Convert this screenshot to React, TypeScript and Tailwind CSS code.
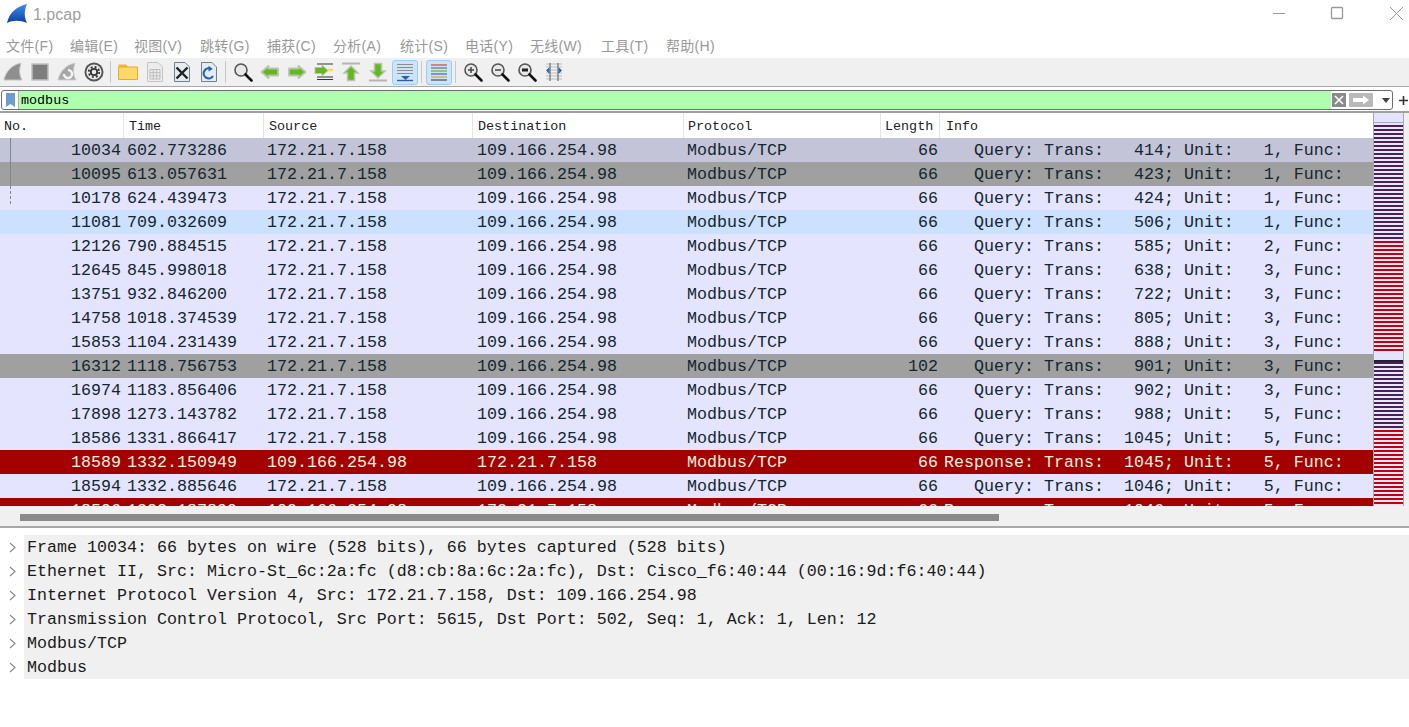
import React from 'react';

const menus = [
  ['文件(F)', 'w-[64px]'],
  ['编辑(E)', 'w-[64px]'],
  ['视图(V)', 'w-[66px]'],
  ['跳转(G)', 'w-[67px]'],
  ['捕获(C)', 'w-[66px]'],
  ['分析(A)', 'w-[67px]'],
  ['统计(S)', 'w-[65px]'],
  ['电话(Y)', 'w-[65px]'],
  ['无线(W)', 'w-[71px]'],
  ['工具(T)', 'w-[65px]'],
  ['帮助(H)', 'w-[64px]'],
];

type Packet = { no: string; time: string; src?: string; dst?: string; len?: string; info: string; bg: string };

const q = (trans: string, unit: string) => `   Query: Trans: ${trans.padStart(5)}; Unit: ${unit.padStart(3)}, Func:`;
const r = (trans: string, unit: string) => `Response: Trans: ${trans.padStart(5)}; Unit: ${unit.padStart(3)}, Func:`;

const normal = 'bg-[#e4e4ff] text-[#12272e]';
const red = 'bg-[#a40000] text-[#f4f0e0]';

const packets: Packet[] = [
  { no: '10034', time: '602.773286', info: q('414', '1'), bg: 'bg-[#c4c4d9] text-[#12272e]' },
  { no: '10095', time: '613.057631', info: q('423', '1'), bg: 'bg-[#a0a0a0] text-[#12272e]' },
  { no: '10178', time: '624.439473', info: q('424', '1'), bg: normal },
  { no: '11081', time: '709.032609', info: q('506', '1'), bg: 'bg-[#cce0ff] text-[#12272e]' },
  { no: '12126', time: '790.884515', info: q('585', '2'), bg: normal },
  { no: '12645', time: '845.998018', info: q('638', '3'), bg: normal },
  { no: '13751', time: '932.846200', info: q('722', '3'), bg: normal },
  { no: '14758', time: '1018.374539', info: q('805', '3'), bg: normal },
  { no: '15853', time: '1104.231439', info: q('888', '3'), bg: normal },
  { no: '16312', time: '1118.756753', len: '102', info: q('901', '3'), bg: 'bg-[#a0a0a0] text-[#12272e]' },
  { no: '16974', time: '1183.856406', info: q('902', '3'), bg: normal },
  { no: '17898', time: '1273.143782', info: q('988', '5'), bg: normal },
  { no: '18586', time: '1331.866417', info: q('1045', '5'), bg: normal },
  { no: '18589', time: '1332.150949', src: '109.166.254.98', dst: '172.21.7.158', info: r('1045', '5'), bg: red },
  { no: '18594', time: '1332.885646', info: q('1046', '5'), bg: normal },
  { no: '18596', time: '1333.187899', src: '109.166.254.98', dst: '172.21.7.158', info: r('1046', '5'), bg: red },
];

const details = [
  'Frame 10034: 66 bytes on wire (528 bits), 66 bytes captured (528 bits)',
  'Ethernet II, Src: Micro-St_6c:2a:fc (d8:cb:8a:6c:2a:fc), Dst: Cisco_f6:40:44 (00:16:9d:f6:40:44)',
  'Internet Protocol Version 4, Src: 172.21.7.158, Dst: 109.166.254.98',
  'Transmission Control Protocol, Src Port: 5615, Dst Port: 502, Seq: 1, Ack: 1, Len: 12',
  'Modbus/TCP',
  'Modbus',
];

const headers = [
  ['No.', 'pl-[4px]'],
  ['Time', 'pl-[5px]'],
  ['Source', 'pl-[5px]'],
  ['Destination', 'pl-[5px]'],
  ['Protocol', 'pl-[4px]'],
  ['Length', 'pl-[4px]'],
  ['Info', 'pl-[6px]'],
];

const columns = 'grid grid-cols-[124px_140px_209px_211px_197px_59px_433px]';

const Ico = ({ children }: { children: React.ReactNode }) => (
  <svg width="20" height="20" viewBox="0 0 20 20" fill="none">{children}</svg>
);

const fin = 'M1 18 C3 9 9 3 18 1 C16 7 16 13 19 18 Z';

const Magnifier = ({ mark }: { mark?: 'plus' | 'minus' | 'reset' }) => (
  <Ico>
    <circle cx="8" cy="8" r="6" fill="#e8e8e8" stroke="#555" strokeWidth="1.6" />
    <path d="M12.5 12.5 L18.5 18.5" stroke="#111" strokeWidth="2.6" strokeLinecap="round" />
    {mark && <path d="M5 8 H11" stroke="#444" strokeWidth="1.5" />}
    {mark === 'plus' && <path d="M8 5 V11" stroke="#444" strokeWidth="1.5" />}
    {mark === 'reset' && <path d="M5 8 H11" stroke="#222" strokeWidth="3" />}
  </Ico>
);

const Arrow = ({ d }: { d: string }) => (
  <Ico>
    <path d={d} fill="#62b81e" stroke="#b8c4ac" strokeWidth="1.8" strokeLinejoin="round" />
  </Ico>
);

const Tool = ({ children, active }: { children: React.ReactNode; active?: boolean }) => (
  <div className="flex w-[27px] h-[26px] items-center justify-center">
    {active ? (
      <div className="flex w-[26px] h-[25px] items-center justify-center rounded-[3px] border border-[#9ccbf5] bg-[#cde4f8]">{children}</div>
    ) : (
      children
    )}
  </div>
);

const Sep = () => (
  <div className="flex w-[7px] h-[26px] items-center justify-center">
    <div className="w-px h-[22px] bg-[#c8c8c8]" />
  </div>
);

const Toolbar = () => (
  <div className="flex h-[29px] items-center bg-[#f0f0f0] border-b border-[#a8a8a8]">
    <div className="flex items-center -ml-px">
      <Tool><Ico><path d={fin} fill="#8f8f8f" stroke="#c4c4c4" /></Ico></Tool>
      <Tool><Ico><rect x="2" y="2" width="16" height="16" fill="#7e7e7e" stroke="#c0c0c0" strokeWidth="1.5" /></Ico></Tool>
      <Tool>
        <Ico>
          <path d={fin} fill="#a8a8a8" stroke="#cfcfcf" />
          <path d="M7 12 A4 4 0 1 0 11 8" stroke="#f2f2f2" strokeWidth="2.4" />
        </Ico>
      </Tool>
      <Tool>
        <Ico>
          <circle cx="10" cy="10" r="9.5" fill="#555" />
          <circle cx="10" cy="10" r="7.6" fill="#ececec" />
          <circle cx="10" cy="10" r="5.2" fill="none" stroke="#333" strokeWidth="1.8" strokeDasharray="2 2.08" />
          <circle cx="10" cy="10" r="3.2" fill="none" stroke="#333" strokeWidth="1.8" />
        </Ico>
      </Tool>
      <Sep />
      <Tool>
        <Ico>
          <path d="M0.5 5 V2.5 H8 L10 5 Z" fill="#f4b51e" />
          <path d="M0.5 5 H19.5 V17.5 H0.5 Z" fill="#fbd869" stroke="#e6ad2c" />
        </Ico>
      </Tool>
      <Tool>
        <Ico>
          <path d="M2.5 0.5 H13 L17.5 5 V19.5 H2.5 Z" fill="#ececec" stroke="#c4c4c4" />
          <path d="M5 7.5 H15 V17 H5 Z M8.3 7.5 V17 M11.7 7.5 V17 M5 10.7 H15 M5 13.9 H15" stroke="#bdbdbd" />
        </Ico>
      </Tool>
      <Tool>
        <Ico>
          <path d="M2.5 0.5 H13 L17.5 5 V19.5 H2.5 Z" fill="#e4ecf2" stroke="#6f7f8c" />
          <path d="M4.5 5.5 L15.5 16.5 M15.5 5.5 L4.5 16.5" stroke="#222" strokeWidth="2.4" />
        </Ico>
      </Tool>
      <Tool>
        <Ico>
          <path d="M2.5 0.5 H13 L17.5 5 V19.5 H2.5 Z" fill="#e4ecf2" stroke="#6f7f8c" />
          <path d="M14 14 A5 5 0 1 1 12 7" stroke="#2a62ae" strokeWidth="2.2" />
          <path d="M9.5 3.8 L13.8 7 L9.5 9.5 Z" fill="#2a62ae" />
        </Ico>
      </Tool>
      <Sep />
      <Tool><Magnifier /></Tool>
      <Tool><Arrow d="M1.5 10 L8.5 4 V6.5 H18 V13.5 H8.5 V16 Z" /></Tool>
      <Tool><Arrow d="M18.5 10 L11.5 4 V6.5 H2 V13.5 H11.5 V16 Z" /></Tool>
      <Tool>
        <Ico>
          <path d="M3 2 H19 M3 15 H19 M3 17.5 H19" stroke="#333" />
          <path d="M14 8 H19" stroke="#f6e04a" strokeWidth="2.5" />
          <path d="M14 8.5 L8 3 V5.5 H1 V11.5 H8 V14 Z" fill="#62b81e" stroke="#b8c4ac" />
        </Ico>
      </Tool>
      <Tool>
        <Ico>
          <path d="M1 1.5 H19" stroke="#b4b4b4" strokeWidth="2" />
          <path d="M10 4 L17 11 H13.5 V18.5 H6.5 V11 H3 Z" fill="#62b81e" stroke="#b8c4ac" strokeWidth="1.5" />
        </Ico>
      </Tool>
      <Tool>
        <Ico>
          <path d="M1 18.5 H19" stroke="#b4b4b4" strokeWidth="2" />
          <path d="M10 16 L17 9 H13.5 V1.5 H6.5 V9 H3 Z" fill="#62b81e" stroke="#b8c4ac" strokeWidth="1.5" />
        </Ico>
      </Tool>
      <Tool active>
        <Ico>
          <path d="M2 2.5 H18 M2 5.5 H18 M2 8.5 H18 M2 11.5 H18" stroke="#8c8c8c" />
          <path d="M2 18.5 H18" stroke="#2f5f9e" strokeWidth="1.4" />
          <path d="M6 14 H15 L10.5 18 Z" fill="#2f5f9e" />
        </Ico>
      </Tool>
      <Sep />
      <Tool active>
        <Ico>
          <path d="M2 3 H18" stroke="#d94b4b" strokeWidth="1.3" />
          <path d="M2 6 H18" stroke="#777" strokeWidth="1.3" />
          <path d="M2 9 H18" stroke="#74b13c" strokeWidth="1.3" />
          <path d="M2 12 H18" stroke="#4a6fc2" strokeWidth="1.3" />
          <path d="M2 15 H18" stroke="#d1a83e" strokeWidth="1.3" />
          <path d="M2 18 H18" stroke="#555" strokeWidth="1.3" />
        </Ico>
      </Tool>
      <Sep />
      <Tool><Magnifier mark="plus" /></Tool>
      <Tool><Magnifier mark="minus" /></Tool>
      <Tool><Magnifier mark="reset" /></Tool>
      <Tool>
        <Ico>
          <path d="M2 2 H18 M2 5 H18 M2 8 H18 M2 11 H18 M2 14 H18 M2 17 H18" stroke="#bdbdbd" />
          <path d="M6 1 V19 M14 1 V19" stroke="#555" />
          <path d="M5 6 V11 L2.5 8.5 Z M15 6 V11 L17.5 8.5 Z" fill="#2f6fc0" stroke="#2f6fc0" />
        </Ico>
      </Tool>
    </div>
  </div>
);

const FilterBar = () => (
  <div className="flex h-[26px] items-start pt-[3px] pl-px bg-white border-b-2 border-[#a0a0a0]">
    <div className="flex w-[1392px] h-[20px] items-stretch rounded-[3px] border border-[#6e6e6e] bg-white overflow-hidden">
      <div className="flex w-[17px] items-center justify-center border-r border-[#b0b0b0]">
        <svg width="9" height="14" viewBox="0 0 9 14"><path d="M0 0 H9 V14 L4.5 11 L0 14 Z" fill="#6d9bd0" /></svg>
      </div>
      <div className="flex-1 bg-[#afffaf] pl-[2px] text-[13.4px] leading-[19px] text-black">modbus</div>
      <div className="flex w-[61px] items-center pl-px gap-[3px]">
        <svg width="14" height="14" viewBox="0 0 14 14">
          <rect width="14" height="14" fill="#8a8a8a" />
          <path d="M3 3 L11 11 M11 3 L3 11" stroke="#fff" strokeWidth="1.6" />
        </svg>
        <svg width="24" height="14" viewBox="0 0 24 14">
          <rect width="24" height="14" rx="1" fill="#b9b9b9" />
          <path d="M4 5 H14 V2.5 L20 7 L14 11.5 V9 H4 Z" fill="#fff" />
        </svg>
        <svg className="ml-[6px]" width="8" height="5" viewBox="0 0 8 5"><path d="M0 0 H8 L4 5 Z" fill="#444" /></svg>
      </div>
    </div>
    <div className="flex flex-1 h-[20px] items-center justify-center pl-[5px]">
      <svg width="9" height="9" viewBox="0 0 9 9"><path d="M4.5 0 V9 M0 4.5 H9" stroke="#333" strokeWidth="1.6" /></svg>
    </div>
  </div>
);

const Minimap = () => (
  <div className="flex flex-col w-[31px] border-x border-[#a8a8a8] bg-[#e4e4ff]">
    <div className="h-[10px] border-b border-[#a8a8c0]" />
    <div className="h-[2px]" />
    <div className="h-[114px] bg-[repeating-linear-gradient(180deg,#4a2058_0px,#4a2058_2.5px,#e8e8f8_2.5px,#e8e8f8_4px)]" />
    <div className="h-[2px]" />
    <div className="h-[111px] bg-[repeating-linear-gradient(180deg,#c00018_0px,#c00018_2.5px,#f4e8ee_2.5px,#f4e8ee_4px)]" />
    <div className="h-[8px]" />
    <div className="h-[2px] bg-[#20203a]" />
    <div className="h-[68px] bg-[repeating-linear-gradient(180deg,#4a2058_0px,#4a2058_2.5px,#e8e8f8_2.5px,#e8e8f8_4px)]" />
    <div className="flex-1 bg-[repeating-linear-gradient(180deg,#c00018_0px,#c00018_2.5px,#f4e8ee_2.5px,#f4e8ee_4px)]" />
  </div>
);

const PacketList = () => (
  <div className="flex h-[393px] bg-[#f0f0f0]">
    <div className="flex flex-col w-[1373px]">
      <div className={`${columns} h-[25px] bg-white text-[13.4px] leading-[27px] text-[#222]`}>
        {headers.map(([h, pad]) => (
          <div key={h} className={`${pad} border-r border-[#e4e4e4] last:border-r-0`}>{h}</div>
        ))}
      </div>
      <div className="flex-1 overflow-hidden text-[16.67px] leading-[26px] whitespace-pre">
        {packets.map((p, i) => (
          <div key={p.no} className={`${columns} h-[24px] ${p.bg}`}>
            <div className="relative pr-[3px] text-right">
              {i < 2 && <div className="absolute left-[10px] top-0 bottom-0 w-px bg-[#7d8a90]" />}
              {i === 2 && <div className="absolute left-[10px] top-0 h-[18px] border-l border-dashed border-[#7d8a90]" />}
              {p.no}
            </div>
            <div className="pl-[3px]">{p.time}</div>
            <div className="pl-[3px]">{p.src ?? '172.21.7.158'}</div>
            <div className="pl-[4px]">{p.dst ?? '109.166.254.98'}</div>
            <div className="pl-[3px]">Modbus/TCP</div>
            <div className="pr-[2px] text-right">{p.len ?? '66'}</div>
            <div className="pl-[4px]">{p.info}</div>
          </div>
        ))}
      </div>
    </div>
    <Minimap />
  </div>
);

export default function App() {
  return (
    <div className="w-[1409px] h-[727px] overflow-hidden bg-white font-['Liberation_Mono',monospace]">
      {/* title bar */}
      <div className="flex h-[32px] items-center">
        <svg className="ml-[6px] -mt-[5px]" width="22" height="22" viewBox="0 0 22 22">
          <defs>
            <linearGradient id="finBlue" x1="0" y1="0" x2="0" y2="1">
              <stop offset="0" stopColor="#3f8fe8" />
              <stop offset="1" stopColor="#0a3fa8" />
            </linearGradient>
          </defs>
          <path d="M1 20 C3 10 11 3 21 1 C18 8 18 14 21 20 C14 17 7 17 1 20 Z" fill="url(#finBlue)" />
        </svg>
        <div className="ml-[5px] -mt-[2px] flex-1 font-['Liberation_Sans',sans-serif] text-[16px] text-[#a0a0a0]">1.pcap</div>
        <svg width="136" height="16" viewBox="0 0 136 16" className="-mt-[7px]">
          <path d="M0 8.5 H12" stroke="#999" />
          <rect x="58.5" y="2.5" width="11" height="11" rx="1" fill="none" stroke="#999" strokeWidth="1.3" />
          <path d="M117 2 L130 15 M130 2 L117 15" stroke="#999" />
        </svg>
      </div>
      {/* menu bar */}
      <div className="flex h-[26px] items-center pt-[2px] pl-[6px] font-['Liberation_Sans','Noto_Sans_CJK_SC',sans-serif] text-[14px] tracking-[0.3px] text-[#999]">
        {menus.map(([label, w]) => (
          <div key={label} className={w}>{label}</div>
        ))}
      </div>
      <Toolbar />
      <FilterBar />
      <PacketList />
      {/* horizontal scrollbar */}
      <div className="h-[22px] bg-[#f0f0f0] pt-[8px] pl-[20px] border-b-2 border-[#a8a8a8]">
        <div className="w-[979px] h-[7px] bg-[#8a8a8a]" />
      </div>
      {/* packet details */}
      <div className="pt-[7px] text-[16.67px] leading-[26px] text-[#1a1a1a] whitespace-pre">
        {details.map((d) => (
          <div key={d} className="flex h-[24px]">
            <div className="flex w-[24px] items-center justify-center">
              <svg width="7" height="11" viewBox="0 0 7 11"><path d="M1 1 L6 5.5 L1 10" fill="none" stroke="#8a8a8a" strokeWidth="1.2" /></svg>
            </div>
            <div className="flex-1 bg-[#f0f0f0] pl-[3px]">{d}</div>
          </div>
        ))}
      </div>
    </div>
  );
}
